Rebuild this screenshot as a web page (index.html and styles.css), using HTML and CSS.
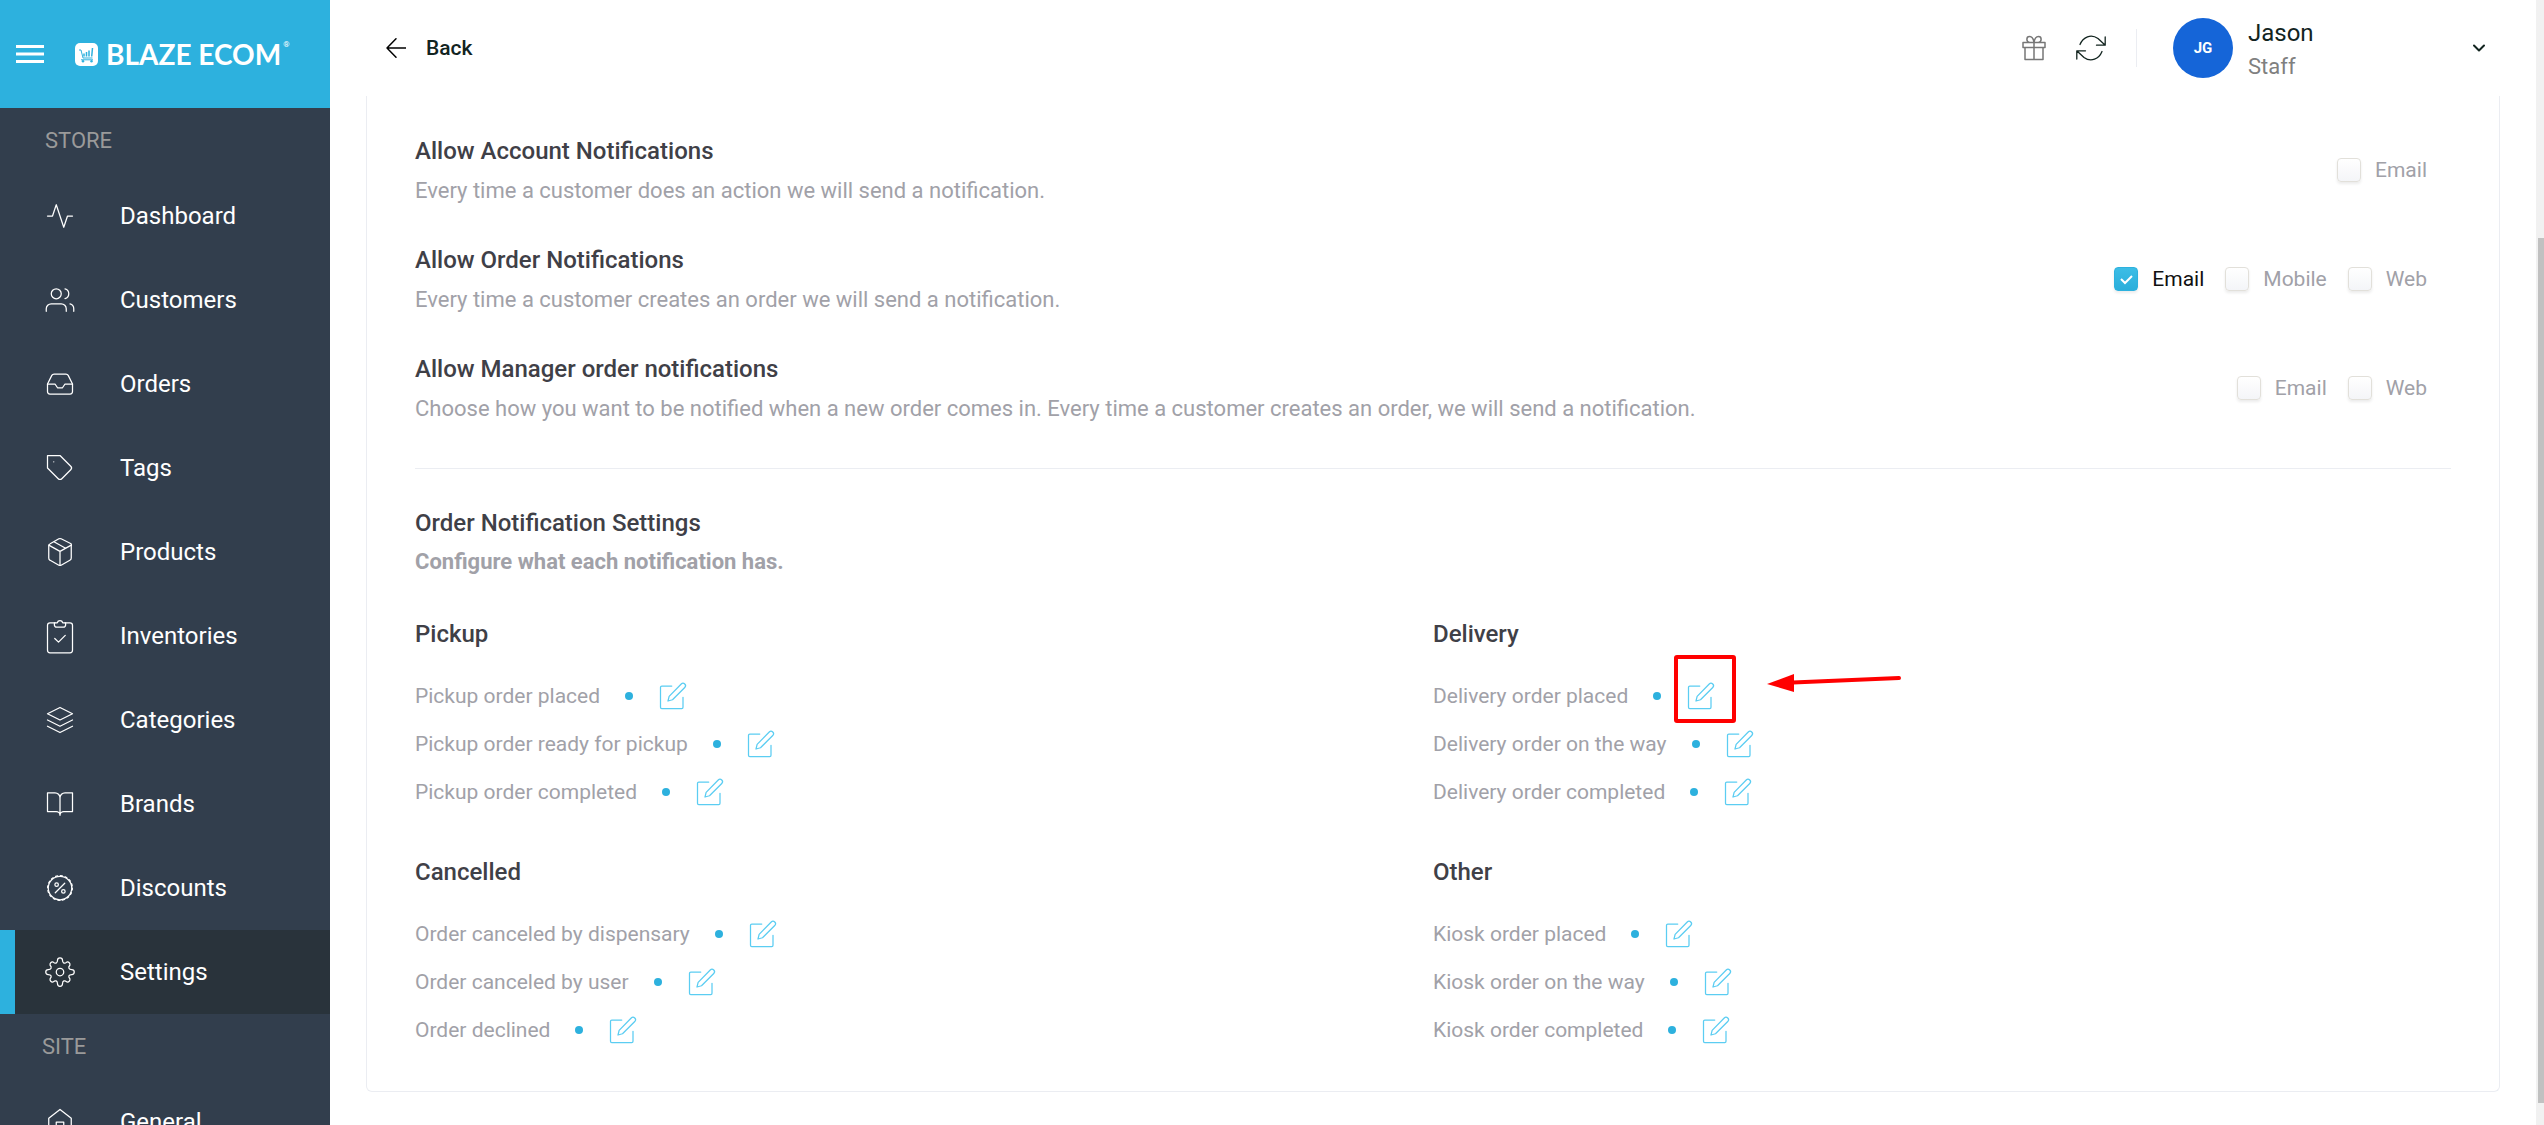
FILE: index.html
```
<!DOCTYPE html>
<html lang="en">
<head>
<meta charset="utf-8">
<title>Notification settings - Blaze Ecom</title>
<link rel="stylesheet" href="styles.css">
</head>
<body>
<svg class="sprite" aria-hidden="true">
  <symbol id="edit" viewBox="0 0 24 24"><path d="M11 4H3a1 1 0 0 0-1 1v16a1 1 0 0 0 1 1h16a1 1 0 0 0 1-1v-8"/><path d="M18.600 2.400a1.900 1.900 0 0 1 2.800 2.800L11.600 15l-3.600 1 .9-3.700z"/></symbol>
</svg>
<div class="app">
  <aside class="sidebar">
    <div class="brand">
      <button class="menu" aria-label="Toggle menu"><svg viewBox="0 0 28 18"><path d="M0 1.500h28M0 9h28M0 16.500h28" stroke-width="3"/></svg></button>
      <a class="logo" href="#">
        <svg viewBox="0 0 23 23" aria-hidden="true"><rect width="23" height="23" rx="5" fill="#fff" stroke="none"/><g stroke="#2db1de" stroke-linecap="butt"><path d="M4 7h2l2 8h9.500M6 16.800h12"/><path d="M9 13.500v-3M11.500 13.500V9M14 13.500V7.500M16.700 13.500l.8-8.500" stroke-width="1.500"/></g><g fill="#2db1de" stroke="none"><circle cx="8" cy="18.300" r="1.200"/><circle cx="16.500" cy="18.300" r="1.200"/></g></svg>
        <span class="wordmark">BLAZE ECOM</span><span class="reg">®</span>
      </a>
    </div>
    <nav>
      <h2 class="nav-title">STORE</h2>
      <a class="nav-item" href="#"><svg viewBox="0 0 24 24"><path d="M22 12h-4l-3 9L9 3l-3 9H2"/></svg>Dashboard</a>
      <a class="nav-item" href="#"><svg viewBox="0 0 24 24"><path d="M17 21v-2a4 4 0 0 0-4-4H5a4 4 0 0 0-4 4v2"/><circle cx="9" cy="7" r="4"/><path d="M23 21v-2a4 4 0 0 0-3-3.870M16 3.130a4 4 0 0 1 0 7.750"/></svg>Customers</a>
      <a class="nav-item" href="#"><svg viewBox="0 0 24 24"><path d="M22 12h-6l-2 3h-4l-2-3H2"/><path d="M5.450 5.110L2 12v6a2 2 0 0 0 2 2h16a2 2 0 0 0 2-2v-6l-3.450-6.890A2 2 0 0 0 16.760 4H7.240a2 2 0 0 0-1.790 1.110z"/></svg>Orders</a>
      <a class="nav-item" href="#"><svg viewBox="0 0 24 24"><path d="M20.590 13.410l-7.170 7.170a2 2 0 0 1-2.830 0L2 12V2h10l8.590 8.590a2 2 0 0 1 0 2.820z"/><path d="M7 7h.01"/></svg>Tags</a>
      <a class="nav-item" href="#"><svg viewBox="0 0 24 24"><path d="M12.890 1.450l8 4A2 2 0 0 1 21 7.240v9.530a2 2 0 0 1-1.110 1.790l-7 4a2 2 0 0 1-1.790 0l-7-3.900A2 2 0 0 1 3 16.760V7.240a2 2 0 0 1 1.110-1.790l7-4a2 2 0 0 1 1.780 0z"/><path d="M3 6.500l9 5 9-5M12 22.500v-11M7.500 4l9 5"/></svg>Products</a>
      <a class="nav-item" href="#"><svg class="tall" viewBox="0 0 24 28"><path d="M8 3H4a2 2 0 0 0-2 2v20a2 2 0 0 0 2 2h16a2 2 0 0 0 2-2V5a2 2 0 0 0-2-2h-4"/><path d="M7.500 3h2.300a2.300 2.300 0 0 1 4.400 0h2.300v1.500a2 2 0 0 1-2 2h-5a2 2 0 0 1-2-2zM7.800 15.600l3 2.900 5.400-5.400"/></svg>Inventories</a>
      <a class="nav-item" href="#"><svg viewBox="0 0 24 24"><path d="M12 2L2 7l10 5 10-5zM2 17l10 5 10-5M2 12l10 5 10-5"/></svg>Categories</a>
      <a class="nav-item" href="#"><svg viewBox="0 0 24 24"><path d="M2 3h6a4 4 0 0 1 4 4v14a3 3 0 0 0-3-3H2zM22 3h-6a4 4 0 0 0-4 4v14a3 3 0 0 1 3-3h7z"/></svg>Brands</a>
      <a class="nav-item" href="#"><svg viewBox="0 0 24 24"><circle cx="12" cy="12" r="9.400"/><circle cx="12" cy="12" r="9.900" stroke-dasharray="1.600 2.290"/><path d="M8.200 15.800l7.600-7.600"/><circle cx="9.300" cy="9.300" r="1.400"/><circle cx="14.700" cy="14.700" r="1.400"/></svg>Discounts</a>
      <a class="nav-item active" href="#" aria-current="page"><svg viewBox="0 0 24 24"><circle cx="12" cy="12" r="3"/><path d="M10 2.600a2 2 0 0 1 4 0c0 2.400 1.700 3.100 3.400 1.500a2 2 0 0 1 2.500 2.500c-1.600 1.700-.9 3.400 1.500 3.400a2 2 0 0 1 0 4c-2.400 0-3.100 1.700-1.500 3.400a2 2 0 0 1-2.500 2.500c-1.700-1.600-3.400-.9-3.400 1.500a2 2 0 0 1-4 0c0-2.400-1.700-3.100-3.400-1.500a2 2 0 0 1-2.500-2.500c1.600-1.700.9-3.400-1.500-3.400a2 2 0 0 1 0-4c2.400 0 3.100-1.700 1.500-3.400a2 2 0 0 1 2.500-2.500c1.700 1.600 3.400.9 3.400-1.500z"/></svg>Settings</a>
      <h2 class="nav-title site">SITE</h2>
      <a class="nav-item" href="#"><svg viewBox="0 0 24 24"><path d="M3 9l9-7 9 7v11a2 2 0 0 1-2 2H5a2 2 0 0 1-2-2z"/><path d="M9 22V12h6v10"/></svg>General</a>
    </nav>
  </aside>

  <div class="page">
    <header class="topbar">
      <a class="back" href="#"><svg viewBox="0 0 20 20"><path d="M20 10H1M10 .8L1 10l9 9.200"/></svg>Back</a>
      <div class="tools">
        <button aria-label="Rewards"><svg class="gift" viewBox="0 0 24 26"><path d="M1 7.500h22v5H1zM3 12.500h18V24.500H3zM12 7.500v17M12 7.500H7.500C4 6.500 4 1.500 7.500 1.500 10.300 1.500 11.500 4 12 7.500zM12 7.500h4.500c3.500-1 3.500-6 0-6C13.700 1.500 12.500 4 12 7.500z"/></svg></button>
        <button aria-label="Refresh"><svg class="refresh" viewBox="0 0 30 26"><path d="M4 9.500C7 2 15-1.500 22 3.500l7 6.500M29.200 2v8.200H20.500M26 16.500C23 24 15 27.500 8 22.500L1 16M.8 24v-8.200h8.700"/></svg></button>
        <button class="account">
          <span class="avatar">JG</span>
          <span class="who"><span class="name">Jason</span><span class="role">Staff</span></span>
          <svg class="chevron" viewBox="0 0 12 8"><path d="M1 1.500l5 5 5-5"/></svg>
        </button>
      </div>
    </header>

    <main class="card">
      <section class="channels">
        <div class="channel">
          <div><h3>Allow Account Notifications</h3><p>Every time a customer does an action we will send a notification.</p></div>
          <div class="options"><label><input type="checkbox">Email</label></div>
        </div>
        <div class="channel">
          <div><h3>Allow Order Notifications</h3><p>Every time a customer creates an order we will send a notification.</p></div>
          <div class="options"><label><input type="checkbox" checked>Email</label><label><input type="checkbox">Mobile</label><label><input type="checkbox">Web</label></div>
        </div>
        <div class="channel">
          <div><h3>Allow Manager order notifications</h3><p>Choose how you want to be notified when a new order comes in. Every time a customer creates an order, we will send a notification.</p></div>
          <div class="options"><label><input type="checkbox">Email</label><label><input type="checkbox">Web</label></div>
        </div>
      </section>

      <section class="settings">
        <h3>Order Notification Settings</h3>
        <p class="strong">Configure what each notification has.</p>
        <div class="groups">
          <div class="group">
            <h3>Pickup</h3>
            <ul>
              <li>Pickup order placed<i></i><button aria-label="Edit pickup order placed"><svg><use href="#edit"/></svg></button></li>
              <li>Pickup order ready for pickup<i></i><button aria-label="Edit pickup order ready for pickup"><svg><use href="#edit"/></svg></button></li>
              <li>Pickup order completed<i></i><button aria-label="Edit pickup order completed"><svg><use href="#edit"/></svg></button></li>
            </ul>
          </div>
          <div class="group">
            <h3>Delivery</h3>
            <ul>
              <li>Delivery order placed<i></i><button class="marked" aria-label="Edit delivery order placed"><svg><use href="#edit"/></svg><svg class="pointer" viewBox="0 0 136 20"><path d="M26 10.500L132 6" stroke="#f00" stroke-width="4" stroke-linecap="round"/><path d="M0 12L27 2v18z" fill="#f00"/></svg></button></li>
              <li>Delivery order on the way<i></i><button aria-label="Edit delivery order on the way"><svg><use href="#edit"/></svg></button></li>
              <li>Delivery order completed<i></i><button aria-label="Edit delivery order completed"><svg><use href="#edit"/></svg></button></li>
            </ul>
          </div>
          <div class="group">
            <h3>Cancelled</h3>
            <ul>
              <li>Order canceled by dispensary<i></i><button aria-label="Edit order canceled by dispensary"><svg><use href="#edit"/></svg></button></li>
              <li>Order canceled by user<i></i><button aria-label="Edit order canceled by user"><svg><use href="#edit"/></svg></button></li>
              <li>Order declined<i></i><button aria-label="Edit order declined"><svg><use href="#edit"/></svg></button></li>
            </ul>
          </div>
          <div class="group">
            <h3>Other</h3>
            <ul>
              <li>Kiosk order placed<i></i><button aria-label="Edit kiosk order placed"><svg><use href="#edit"/></svg></button></li>
              <li>Kiosk order on the way<i></i><button aria-label="Edit kiosk order on the way"><svg><use href="#edit"/></svg></button></li>
              <li>Kiosk order completed<i></i><button aria-label="Edit kiosk order completed"><svg><use href="#edit"/></svg></button></li>
            </ul>
          </div>
        </div>
      </section>
    </main>
  </div>
  <div class="scrollbar" aria-hidden="true"><span></span></div>
</div>
</body>
</html>
```
FILE: styles.css
```
*, *::before { box-sizing: border-box; }
body, h2, h3, p, ul { margin: 0; padding: 0; }
body {
  font-family: Roboto, "Liberation Sans", sans-serif;
  font-size: 22px;
  line-height: 32px;
  color: #a1a1a8;
  background: #fff;
}
button { font: inherit; color: inherit; padding: 0; border: 0; background: none; cursor: pointer; }
a { color: inherit; text-decoration: none; }
svg { display: block; fill: none; stroke: currentColor; stroke-linecap: round; stroke-linejoin: round; }
.sprite { position: absolute; width: 0; height: 0; }

.app { display: grid; grid-template-columns: 330px 1fr 8px; grid-template-rows: 100%; height: 100vh; overflow: hidden; }

/* Sidebar */
.sidebar { background: #323e4d; overflow: hidden; }
.brand { display: flex; align-items: center; gap: 31px; height: 108px; padding: 0 16px; background: #2db1de; color: #fff; }
.menu svg { width: 28px; height: 18px; stroke-linecap: butt; }
.logo { display: flex; align-items: center; }
.logo svg { width: 23px; height: 23px; margin-right: 8px; }
.wordmark { font: 700 28px/32px Lato, sans-serif; white-space: nowrap; }
.reg { align-self: flex-start; font-size: 8px; line-height: 14px; margin-left: 2px; }
.nav-title { padding: 0 45px; font-size: 22px; font-weight: 400; line-height: 66px; color: #9a9a9a; }
.nav-title.site { padding: 0 42px; }
.nav-item { display: flex; align-items: center; height: 84px; padding-left: 45px; gap: 45px; font-size: 24px; color: #fff; }
.nav-item svg { width: 30px; height: 30px; flex: none; }
.nav-item .tall { height: 35px; }
.nav-item.active { padding-left: 30px; border-left: 15px solid #2db1de; background: #29333b; }

/* Top bar */
.page { display: flex; flex-direction: column; min-width: 0; padding: 0 36px; }
.topbar { display: flex; align-items: center; justify-content: space-between; height: 96px; padding: 0 15px 0 20px; flex: none; color: #12241f; }
.back { display: flex; align-items: center; gap: 20px; font-size: 21px; font-weight: 500; }
.back svg { width: 20px; height: 20px; stroke: #000; stroke-width: 1.5; }
.tools { display: flex; align-items: center; gap: 30px; }
.gift { width: 24px; height: 26px; color: #777; stroke-width: 1.5; }
.refresh { width: 30px; height: 26px; stroke-width: 1.3; }
.account { display: flex; align-items: center; text-align: left; border-left: 1px solid #ebedf2; padding-left: 36px; height: 38px; }
.avatar { width: 60px; height: 60px; border-radius: 50%; background: #1565d8; color: #fff; font-size: 15px; font-weight: 700; line-height: 60px; text-align: center; }
.who { display: flex; flex-direction: column; width: 225px; margin-left: 15px; padding-top: 3px; line-height: 33px; }
.name { font-size: 24px; }
.role { font-size: 22px; color: #808080; }
.chevron { width: 12px; height: 8px; stroke-width: 2; }

/* Settings card */
.card { border: 1px solid #ebedf2; border-top: 0; border-radius: 0 0 6px 6px; padding: 37px 48px; }
h3 { font-size: 24px; font-weight: 500; line-height: 36px; color: #3f4047; }
.channels { display: flex; flex-direction: column; gap: 35px; padding-bottom: 43px; border-bottom: 1px solid #ebedf2; }
.channel { display: flex; align-items: center; justify-content: space-between; }
.channel p { margin-top: 6px; }
.options { display: flex; gap: 21px; padding-right: 24px; font-size: 21px; }
.options label { display: flex; align-items: center; gap: 14px; }
.options label:has(:checked) { color: #111; }
.options input {
  appearance: none;
  width: 24px;
  height: 24px;
  margin: 0;
  border: 1px solid #e2e0da;
  border-radius: 4px;
  background: linear-gradient(#fff, #f4f5f8);
  box-shadow: 0 2px 3px rgba(0, 0, 0, .08);
}
.options input:checked {
  border-color: #2db1de;
  background: url("data:image/svg+xml,%3Csvg xmlns='http://www.w3.org/2000/svg' viewBox='0 0 22 22'%3E%3Cpath d='M6 11l4 4 7-7' fill='none' stroke='white' stroke-width='2'/%3E%3C/svg%3E"), linear-gradient(#3cbde6, #2aaedb);
}
.settings { padding-top: 36px; }
.strong { font-weight: 700; margin-top: 5px; }
.groups { display: grid; grid-template-columns: 1fr 1fr; row-gap: 38px; margin-top: 38px; }
.group ul { list-style: none; margin-top: 20px; font-size: 21px; }
.group li { display: flex; align-items: center; height: 48px; }
.group i { width: 8px; height: 8px; margin: 0 25px; border-radius: 50%; background: #2db1de; }
.group button { position: relative; color: #5bcdf2; }
.group button svg { width: 30px; height: 30px; }

/* Callout drawn round the edit button */
.marked::before { content: ""; position: absolute; left: -12px; top: -26px; width: 62px; height: 68px; border: 4px solid #f00; border-radius: 3px; }
.group .marked .pointer { position: absolute; left: 81px; top: -9px; width: 136px; height: 20px; stroke: none; }

/* Scrollbar */
.scrollbar { background: #f1f1f1; padding: 238px 0 22px 2px; }
.scrollbar span { display: block; height: 100%; background: #c1c1c1; }
```
